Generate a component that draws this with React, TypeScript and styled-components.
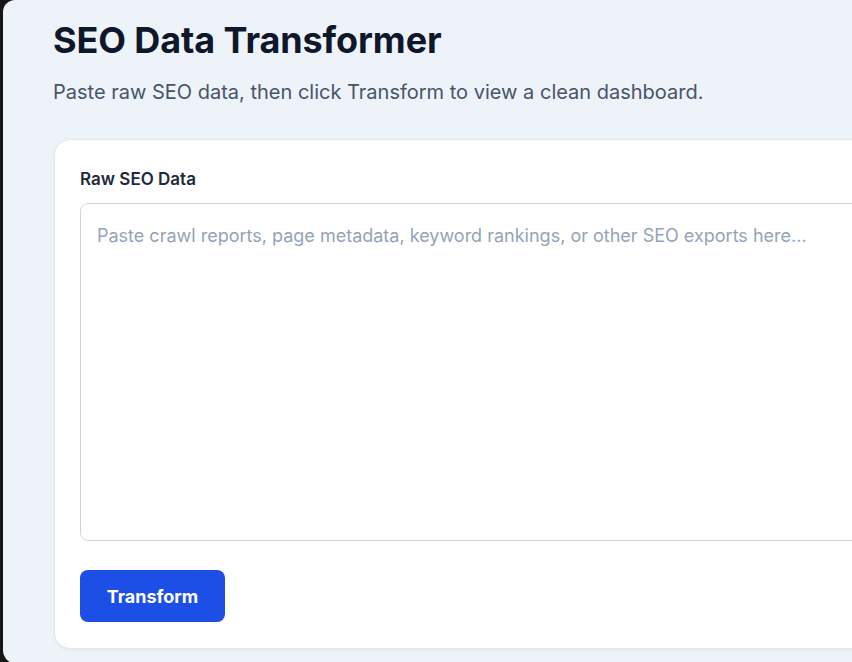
import React, { useState } from 'react';
import styled, { createGlobalStyle } from 'styled-components';

const GlobalStyle = createGlobalStyle`
  html, body {
    margin: 0;
    padding: 0;
    background: #161616;
    overflow: hidden;
  }
  * {
    box-sizing: border-box;
  }
`;

// the app window, with the desktop showing at its left edge
const Window = styled.div`
  margin-left: 3px;
  width: 1100px;
  height: 664px;
  background: #eef2f9;
  border-radius: 12px 0 0 14px;
  overflow: hidden;
  font-family: Inter, "Liberation Sans", sans-serif;
  color: #0f172a;
`;

const Page = styled.main`
  padding: 20px 0 0 50px;
  display: flex;
  flex-direction: column;
`;

const Title = styled.h1`
  margin: 0;
  font-size: 36px;
  line-height: 40px;
  font-weight: 700;
  letter-spacing: -0.1px;
  color: #0f172a;
`;

const Subtitle = styled.p`
  margin: 18px 0 0;
  font-size: 20px;
  line-height: 28px;
  color: #475569;
`;

const Card = styled.section`
  margin-top: 33px;
  margin-left: 1px;
  width: 960px;
  background: #ffffff;
  border: 1px solid #e2e8f0;
  border-radius: 16px;
  box-shadow: 0 1px 3px rgba(15, 23, 42, 0.06);
  padding: 26px 25px 26px;
  display: flex;
  flex-direction: column;
`;

const Label = styled.label`
  font-size: 17px;
  line-height: 26px;
  font-weight: 600;
  color: #1e293b;
  margin-bottom: 11px;
`;

const TextArea = styled.textarea`
  width: 100%;
  height: 338px;
  resize: none;
  border: 1px solid #cbd5e1;
  border-radius: 8px;
  padding: 19px 16px;
  font-family: inherit;
  font-size: 18px;
  line-height: 26px;
  color: #0f172a;
  outline: none;
  &::placeholder {
    color: #94a3b8;
  }
`;

const Actions = styled.div`
  margin-top: 29px;
  display: flex;
`;

const Button = styled.button`
  width: 145px;
  height: 52px;
  border: none;
  border-radius: 8px;
  background: #1d4fe6;
  color: #ffffff;
  font-family: inherit;
  font-size: 18px;
  font-weight: 700;
  cursor: pointer;
`;

const App = () => {
  const [raw, setRaw] = useState('');

  return (
    <>
      <GlobalStyle />
      <Window>
        <Page>
          <Title>SEO Data Transformer</Title>
          <Subtitle>Paste raw SEO data, then click Transform to view a clean dashboard.</Subtitle>
          <Card>
            <Label htmlFor="raw">Raw SEO Data</Label>
            <TextArea
              id="raw"
              value={raw}
              onChange={(e) => setRaw(e.target.value)}
              placeholder="Paste crawl reports, page metadata, keyword rankings, or other SEO exports here..."
            />
            <Actions>
              <Button>Transform</Button>
            </Actions>
          </Card>
        </Page>
      </Window>
    </>
  );
};

export default App;
